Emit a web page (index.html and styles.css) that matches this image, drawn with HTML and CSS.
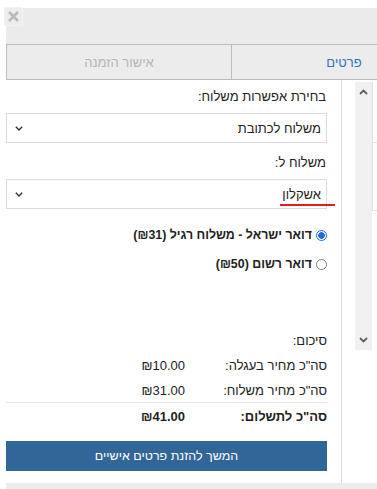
FILE: index.html
```html
<!DOCTYPE html>
<html lang="he">
<head>
<meta charset="utf-8">
<link rel="stylesheet" href="styles.css">
</head>
<body>
<div class="dialog">
  <div class="header"></div>
  <button class="close" aria-label="close">
    <svg width="13" height="13" viewBox="0 0 13 13"><path d="M2 2 L11 11 M11 2 L2 11" stroke="#b9b9b9" stroke-width="2.6" stroke-linecap="butt"/></svg>
  </button>
  <div class="tabs">
    <div class="tab disabled">אישור הזמנה</div>
    <div class="tab active">פרטים</div>
  </div>
  <div class="main">
    <div class="content" dir="rtl">
      <div class="label first">בחירת אפשרות משלוח:</div>
      <div class="select"><span>משלוח לכתובת</span><svg class="chev" width="8" height="5" viewBox="0 0 8 5"><path d="M0.8 0.8 L4 4 L7.2 0.8" fill="none" stroke="#333" stroke-width="1.4"/></svg></div>
      <div class="label second">משלוח ל:</div>
      <div class="select"><span class="spell">אשקלון</span><svg class="chev" width="8" height="5" viewBox="0 0 8 5"><path d="M0.8 0.8 L4 4 L7.2 0.8" fill="none" stroke="#333" stroke-width="1.4"/></svg></div>
      <div class="radios">
        <div class="radio-row"><span class="radio checked"></span><span class="rtext">דואר ישראל - משלוח רגיל (₪31)</span></div>
        <div class="radio-row"><span class="radio"></span><span class="rtext">דואר רשום (₪50)</span></div>
      </div>
      <div class="summary-title">סיכום:</div>
      <div class="sum-row"><span class="sl">סה"כ מחיר בעגלה:</span><span class="sv">₪10.00</span></div>
      <div class="sum-row"><span class="sl">סה"כ מחיר משלוח:</span><span class="sv">₪31.00</span></div>
      <div class="sum-row total"><span class="sl">סה"כ לתשלום:</span><span class="sv">₪41.00</span></div>
      <div class="btn">המשך להזנת פרטים אישיים</div>
    </div>
    <div class="side">
      <div class="scroll">
        <svg width="9" height="6" viewBox="0 0 9 6"><path d="M1 5 L4.5 1.5 L8 5" fill="none" stroke="#606060" stroke-width="1.8"/></svg>
        <svg width="9" height="6" viewBox="0 0 9 6"><path d="M1 1 L4.5 4.5 L8 1" fill="none" stroke="#606060" stroke-width="1.8"/></svg>
      </div>
      <div class="edge">
        <div class="edge-box"></div>
        <div class="edge-box low"></div>
      </div>
    </div>
  </div>
  <div class="footer"></div>
</div>
</body>
</html>
```
FILE: styles.css
```css
html, body {
  margin: 0;
  padding: 0;
  background: #fff;
  overflow: hidden;
}
body {
  width: 377px;
  height: 489px;
  font-family: "Liberation Sans", Arial, sans-serif;
  font-size: 13px;
  color: #222;
}
.dialog {
  position: relative;
  margin: 8px 0 0 6px;
  width: 371px;
}
.header {
  height: 36px;
  background: #ebebeb;
}
.close {
  position: absolute;
  left: -2px;
  top: -1px;
  width: 19px;
  height: 19px;
  padding: 0;
  border: 1px solid #f2f2f2;
  border-radius: 2px;
  background: #ededed;
  display: flex;
  align-items: center;
  justify-content: center;
}
.tabs {
  display: flex;
  overflow: hidden;
  height: 34px;
  border-top: 1px solid #bdbdbd;
  border-bottom: 1px solid #bdbdbd;
  border-left: 1px solid #bdbdbd;
  background: #ececec;
}
.tab {
  width: 224px;
  flex-shrink: 0;
  display: flex;
  align-items: center;
  justify-content: center;
  font-size: 13px;
}
.tab.disabled {
  color: #b5b5b5;
  border-right: 1px solid #bdbdbd;
}
.tab.active {
  color: #2f73bd;
}
.main {
  display: flex;
  height: 403px;
}
.content {
  width: 321px;
  display: flex;
  flex-direction: column;
}
.label {
  line-height: 15px;
  padding-right: 1px;
}
.label.first { margin-top: 9px; }
.label.second { margin-top: 12px; }
.select {
  margin-top: 9px;
  height: 28px;
  border: 1px solid #dcdcdc;
  display: flex;
  align-items: center;
  justify-content: space-between;
  padding: 0 5px 0 8px;
}
.select span { line-height: 15px; }
.spell {
  position: relative;
}
.spell::after {
  content: "";
  position: absolute;
  left: -2px;
  right: -14px;
  bottom: -4px;
  height: 2px;
  background: #e0201d;
}
.chev { margin-top: 1px; }
.radios {
  margin-top: 19px;
  display: flex;
  flex-direction: column;
  gap: 14px;
}
.radio-row {
  display: flex;
  align-items: center;
  gap: 4px;
  font-weight: bold;
  font-size: 12.4px;
  line-height: 15px;
}
.radio {
  width: 9px;
  height: 9px;
  border: 1px solid #808080;
  border-radius: 50%;
  background: #fff;
  box-sizing: content-box;
}
.radio.checked {
  border-color: #1a6fe0;
  background: radial-gradient(circle, #1a6fe0 0 3px, #fff 3.6px);
}
.summary-title {
  margin-top: 61px;
  line-height: 15px;
}
.sum-row {
  display: flex;
  line-height: 15px;
  margin-top: 10px;
}
.sl { width: 142px; }
.sum-row.total {
  font-weight: bold;
  border-top: 1px solid #e6e6e6;
  padding-top: 6px;
  margin-top: 4px;
}
.btn {
  margin-top: 17px;
  height: 30px;
  background: #336698;
  color: #fff;
  display: flex;
  align-items: center;
  justify-content: center;
  font-size: 12.5px;
}
.side {
  display: flex;
  margin-left: 14px;
  border-left: 1px solid #dedede;
  flex: 1;
}
.scroll {
  margin: 2px 0 0 13px;
  width: 17px;
  height: 268px;
  background: #f0f0f0;
  display: flex;
  flex-direction: column;
  justify-content: space-between;
  align-items: center;
  padding: 7px 0;
  box-sizing: border-box;
}
.edge {
  margin-top: 2px;
  flex: 1;
  border-left: 1px solid #e2e2e2;
  height: 128px;
  border-bottom: 1px solid #e2e2e2;
}
.edge-box {
  height: 60px;
  border-bottom: 1px solid #e2e2e2;
}
.edge-box.low { border-bottom: none; }
.footer {
  height: 6px;
  background: #ececec;
}
```
